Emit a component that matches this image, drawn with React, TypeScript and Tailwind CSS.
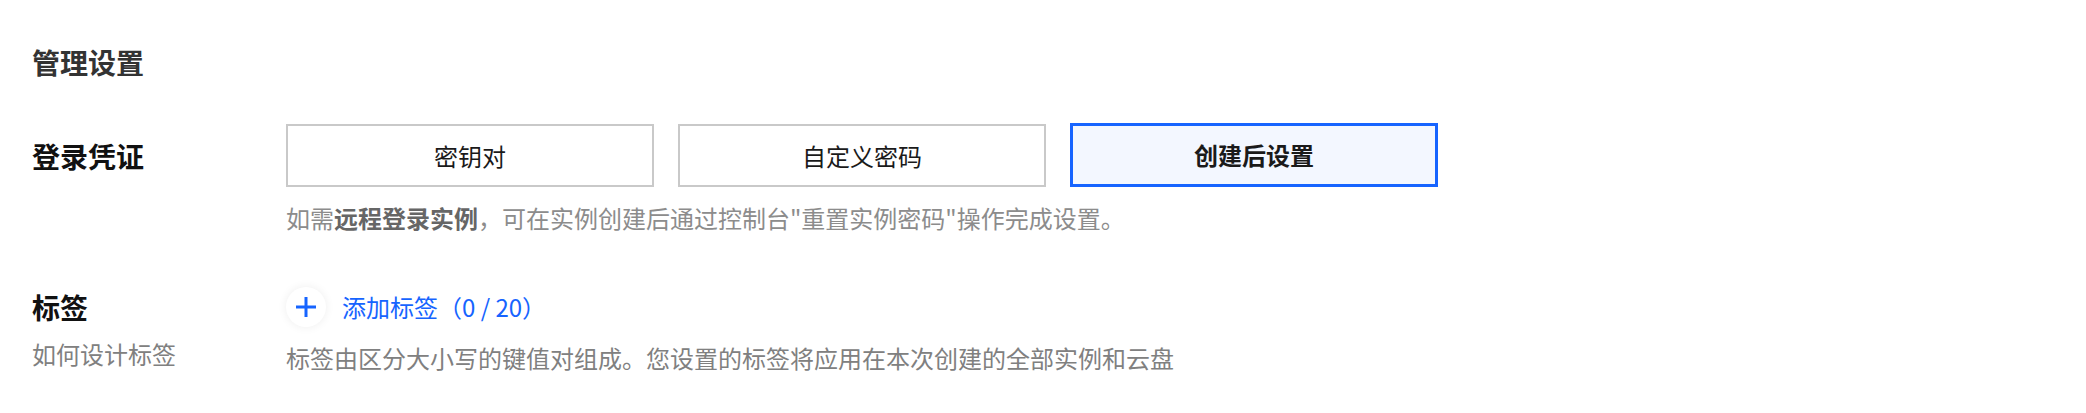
import React from "react";

const font = { fontFamily: '"Noto Sans CJK SC", "Noto Sans", sans-serif' };

function OptionButton({ label, selected }: { label: string; selected?: boolean }) {
  return (
    <div
      className={
        selected
          ? "w-[368px] h-[64px] border-[3px] border-[#1664ff] bg-[#f3f7ff] flex items-center justify-center text-[24px] font-bold text-[#1a1a1a] -mt-px"
          : "w-[368px] h-[63px] border-2 border-[#c9c9c9] bg-white flex items-center justify-center text-[24px] text-[#1a1a1a]"
      }
    >
      {label}
    </div>
  );
}

export default function App() {
  return (
    <div className="w-[2086px] h-[413px] bg-white pl-8 overflow-hidden" style={font}>
      <div className="pt-[42px] text-[28px] leading-[40px] font-bold text-[#333333]">管理设置</div>

      <div className="mt-[42px] flex">
        <div className="w-[254px] h-[63px] flex items-center text-[28px] font-bold text-[#111111]">登录凭证</div>
        <div className="flex flex-col">
          <div className="flex gap-6 items-start h-[63px]">
            <OptionButton label="密钥对" />
            <OptionButton label="自定义密码" />
            <OptionButton label="创建后设置" selected />
          </div>
          <div className="mt-[15px] text-[24px] leading-[32px] text-[#8c8c8c]">
            如需<span className="font-bold text-[#666666]">远程登录实例</span>，可在实例创建后通过控制台"重置实例密码"操作完成设置。
          </div>
        </div>
      </div>

      <div className="mt-[53px] flex">
        <div className="w-[254px] flex flex-col">
          <div className="text-[28px] leading-[40px] font-bold text-[#111111]">标签</div>
          <div className="mt-[11px] text-[24px] leading-[32px] text-[#808080]">如何设计标签</div>
        </div>
        <div className="flex flex-col">
          <div className="flex items-center h-[40px]">
            <div className="w-[40px] h-[40px] rounded-full bg-white shadow-[0_0_10px_rgba(0,0,0,0.07)] flex items-center justify-center">
              <svg width="22" height="22" viewBox="0 0 22 22">
                <path d="M11 1v20M1 11h20" stroke="#1664ff" strokeWidth="3" />
              </svg>
            </div>
            <span className="ml-[16px] text-[24px] leading-[32px] text-[#1664ff]">添加标签（0 / 20）</span>
          </div>
          <div className="mt-[15px] text-[24px] leading-[32px] text-[#808080]">
            标签由区分大小写的键值对组成。您设置的标签将应用在本次创建的全部实例和云盘
          </div>
        </div>
      </div>
    </div>
  );
}
